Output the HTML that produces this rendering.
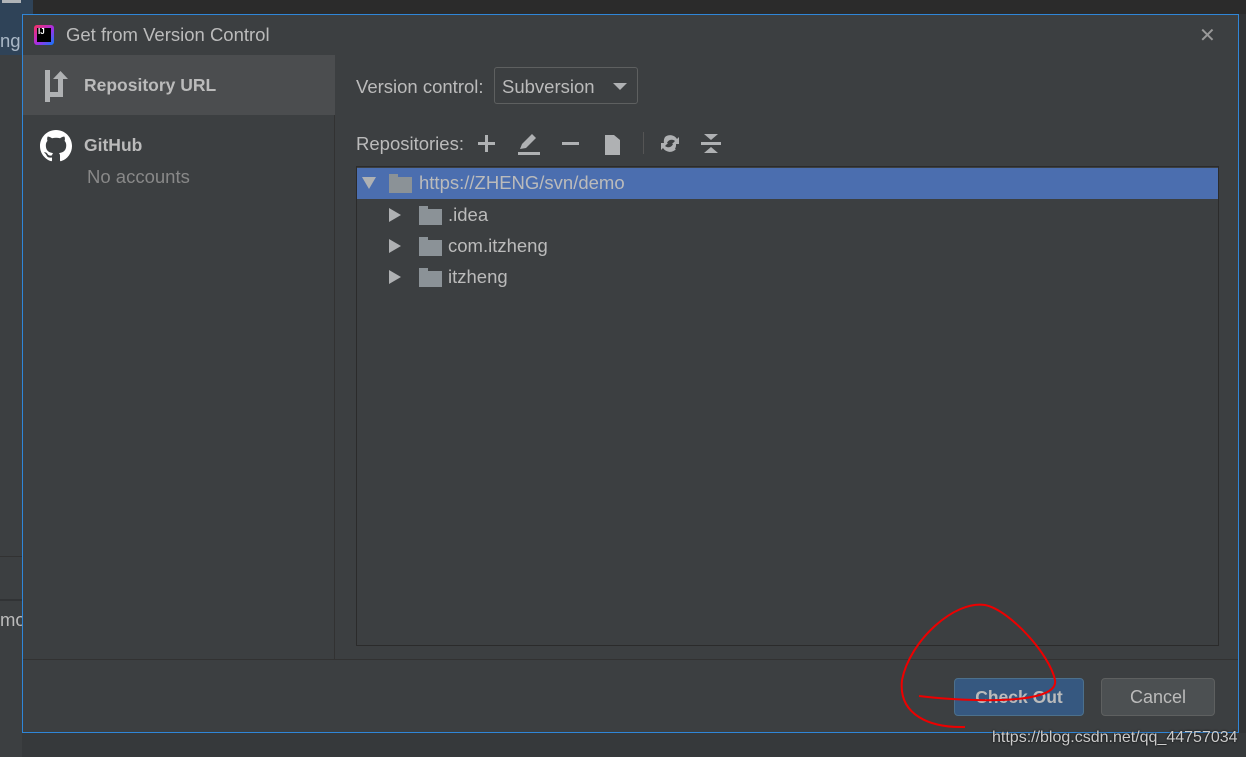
<!DOCTYPE html>
<html><head><meta charset="utf-8"><style>
*{margin:0;padding:0;box-sizing:border-box}
body{width:1246px;height:757px;background:#3c3f41;position:relative;overflow:hidden;font-family:"Liberation Sans","DejaVu Sans",sans-serif;color:#bbbbbb}
.abs{position:absolute}
.t{font-size:18.5px;color:#bbb}
.f{position:absolute;width:23px;height:16px;background:#8b9297}
.f:before{content:"";position:absolute;left:0;top:-3px;width:9px;height:3px;background:#8b9297}
</style></head><body>
<div class="abs" style="left:0;top:0;width:1246px;height:14px;background:#2b2b2b"></div>
<div class="abs" style="left:0;top:0;width:33px;height:55px;background:#2f4358"></div>
<div class="abs" style="left:2px;top:0;width:19px;height:3px;background:#b0b4b8"></div>
<div class="abs t" style="left:0;top:30px;color:#a9b7c6">ng</div>
<div class="abs" style="left:0;top:556px;width:22px;height:1px;background:#323232"></div>
<div class="abs" style="left:0;top:599px;width:22px;height:2px;background:#313335"></div>
<div class="abs t" style="left:0;top:609px">mo</div>
<div class="abs" style="left:1238px;top:14px;width:8px;height:743px;background:#313335"></div>
<div class="abs" style="left:22px;top:733px;width:1224px;height:24px;background:#36393b"></div>

<div class="abs" style="left:22px;top:14px;width:1217px;height:719px;border:1px solid #2f86d8;background:#3c3f41">
 <div class="abs" style="left:11px;top:10px;width:20px;height:20px;border-radius:3px;background:linear-gradient(135deg,#fe315d,#a32ee6 55%,#087cfa)"></div>
 <div class="abs" style="left:14px;top:13px;width:14px;height:14px;background:#000;color:#fff;font-size:8px;font-weight:bold;line-height:8px;padding-left:1px">IJ</div>
 <div class="abs t" style="left:43px;top:9px">Get from Version Control</div>
 <div class="abs" style="left:1176px;top:8px;font-size:20px;color:#999">✕</div>
 <div class="abs" style="left:0;top:40px;width:312px;height:605px;background:#3c3f41;border-right:1px solid #323232"></div>
 <div class="abs" style="left:0;top:40px;width:312px;height:60px;background:#4b4d4f"></div>
 <svg class="abs" style="left:22px;top:55px" width="30" height="32" viewBox="0 0 30 32"><path d="M0 0h5v32H0z M0 22h18v5H0z M13 8h5v19h-5z M8 9l7.5-8 7.5 8z" fill="#afb1b3"/></svg>
 <div class="abs" style="left:61px;top:60px;font-size:17.5px;font-weight:bold;color:#bbb">Repository URL</div>
 <svg class="abs" style="left:17px;top:115px" width="32" height="32" viewBox="0 0 16 16"><path fill="#fff" d="M8 0C3.58 0 0 3.58 0 8c0 3.540 2.29 6.53 5.47 7.59.4.07.55-.17.55-.38 0-.19-.01-.82-.01-1.49-2.01.37-2.53-.49-2.690-.94-.09-.23-.48-.94-.82-1.13-.28-.15-.68-.52-.01-.53.63-.01 1.08.58 1.23.82.72 1.21 1.87.87 2.33.66.07-.52.28-.87.51-1.07-1.78-.2-3.64-.89-3.64-3.950 0-.87.31-1.590.82-2.15-.08-.2-.36-1.02.08-2.12 0 0 .67-.21 2.2.82.64-.18 1.32-.27 2-.27.68 0 1.36.09 2 .27 1.53-1.04 2.2-.82 2.2-.82.44 1.1.16 1.92.08 2.12.51.56.82 1.27.82 2.15 0 3.07-1.87 3.75-3.65 3.95.29.25.54.73.54 1.48 0 1.07-.01 1.93-.01 2.2 0 .21.15.46.55.38A8.013 8.013 0 0016 8c0-4.42-3.58-8-8-8z"/></svg>
 <div class="abs" style="left:61px;top:120px;font-size:17.5px;font-weight:bold;color:#bbb">GitHub</div>
 <div class="abs t" style="left:64px;top:151px;color:#888">No accounts</div>
 <div class="abs t" style="left:333px;top:61px">Version control:</div>
 <div class="abs" style="left:471px;top:52px;width:144px;height:37px;border:1px solid #5e6060;border-radius:3px;background:#3c3f41"></div>
 <div class="abs t" style="left:479px;top:61px">Subversion</div>
 <div class="abs" style="left:590px;top:68px;width:0;height:0;border-left:7px solid transparent;border-right:7px solid transparent;border-top:7px solid #afb1b3"></div>
 <div class="abs t" style="left:333px;top:118px">Repositories:</div>
 <svg class="abs" style="left:452px;top:116px" width="250" height="26" viewBox="0 0 250 26">
  <g fill="#afb1b3">
   <rect x="3" y="11" width="17" height="3"/><rect x="10" y="4" width="3" height="17"/>
   <rect x="43" y="21" width="22" height="3"/><path d="M45 18l2-5 10-10 4 4-10 10z"/>
   <rect x="87" y="11" width="17" height="3"/>
   <path d="M130 4h9l6 5v15h-15z"/>
   <rect x="168" y="1" width="1" height="22" fill="#555"/>
   <path d="M190 6a8 8 0 0 1 12 2l2-2v7h-7l3-3a5 5 0 0 0-8 2h-3a8 8 0 0 1 1-6zM201 18a8 8 0 0 1-13-1l-2 2v-7h7l-3 3a5 5 0 0 0 8-2h3a8 8 0 0 1-1 5z"/>
   <rect x="226" y="11" width="20" height="3"/><path d="M229 3h14l-7 6z M229 22h14l-7-6z"/>
  </g></svg>
 <div class="abs" style="left:333px;top:151px;width:863px;height:480px;border:1px solid #2b2b2b;background:#3c3f41"></div>
 <div class="abs" style="left:334px;top:153px;width:861px;height:31px;background:#4b6eaf"></div>
 <div class="abs" style="left:339px;top:162px;border-left:7px solid transparent;border-right:7px solid transparent;border-top:12px solid #afb1b3"></div>
 <div class="f" style="left:366px;top:162px"></div>
 <div class="abs t" style="left:396px;top:157px">https://ZHENG/svn/demo</div>
 <div class="abs" style="left:366px;top:193px;border-top:7px solid transparent;border-bottom:7px solid transparent;border-left:12px solid #afb1b3"></div>
 <div class="f" style="left:396px;top:194px"></div>
 <div class="abs t" style="left:425px;top:189px">.idea</div>
 <div class="abs" style="left:366px;top:224px;border-top:7px solid transparent;border-bottom:7px solid transparent;border-left:12px solid #afb1b3"></div>
 <div class="f" style="left:396px;top:225px"></div>
 <div class="abs t" style="left:425px;top:220px">com.itzheng</div>
 <div class="abs" style="left:366px;top:255px;border-top:7px solid transparent;border-bottom:7px solid transparent;border-left:12px solid #afb1b3"></div>
 <div class="f" style="left:396px;top:256px"></div>
 <div class="abs t" style="left:425px;top:251px">itzheng</div>
 <div class="abs" style="left:0;top:644px;width:1215px;height:1px;background:#323232"></div>
 <div class="abs" style="left:931px;top:663px;width:130px;height:38px;border:1px solid #4c708c;border-radius:4px;background:#365880;color:#bbb;font-size:17.5px;font-weight:bold;text-align:center;line-height:36px">Check Out</div>
 <div class="abs" style="left:1078px;top:663px;width:114px;height:38px;border:1px solid #5e6060;border-radius:4px;background:#4c5052;color:#bbb;font-size:18px;text-align:center;line-height:36px">Cancel</div>
</div>
<svg class="abs" style="left:0;top:0" width="1246" height="757"><path d="M919 696C950 700 1060 708 1055 680C1050 655 1010 610 985 605C955 600 910 640 902 680C898 715 930 728 965 727" fill="none" stroke="#e00" stroke-width="2"/></svg>
<div class="abs" style="left:992px;top:729px;font-size:16px;color:#ccc;text-shadow:0 0 2px #000">https://blog.csdn.net/qq_44757034</div>
</body></html>
